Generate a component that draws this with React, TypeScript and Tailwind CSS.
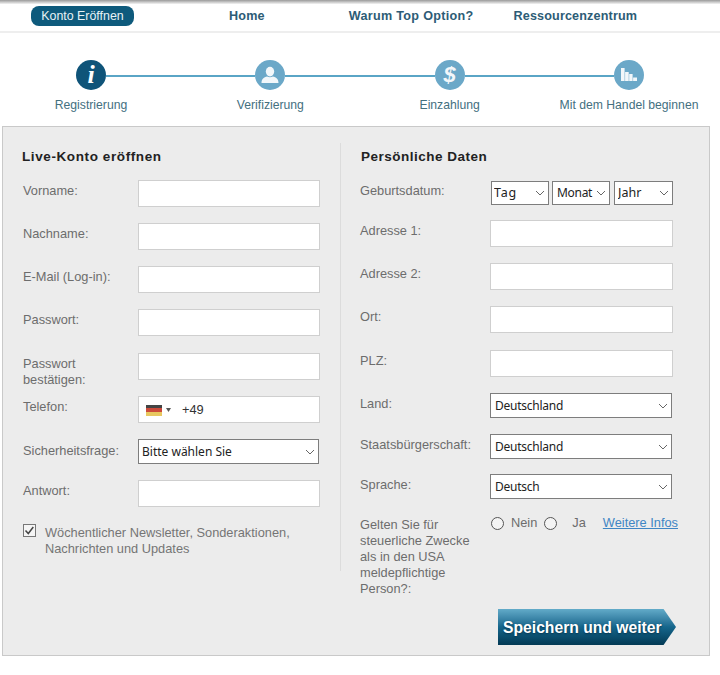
import React from "react";

const sans = "font-['Liberation_Sans',Arial,sans-serif]";
const selectFont = "font-['Noto_Sans',sans-serif]";

function Chevron() {
  return (
    <svg className="pointer-events-none absolute right-[4px] top-1/2 -translate-y-1/2" width="10" height="6" viewBox="0 0 10 6" fill="none">
      <path d="M1 1l4 4 4-4" stroke="#666" strokeWidth="1" />
    </svg>
  );
}

function Sel({ value, className, pad = "pl-[4px]", text = "text-[12px]" }: { value: string; className: string; pad?: string; text?: string }) {
  return (
    <div className={`relative shrink-0 ${className}`}>
      <select
        defaultValue={value}
        className={`block h-full w-full appearance-none rounded-none border border-[#7d7d7d] bg-white ${pad} ${text} text-[#222] outline-none ${selectFont}`}
      >
        <option>{value}</option>
      </select>
      <Chevron />
    </div>
  );
}

function Field({ className = "" }: { className?: string }) {
  return <input className={`block h-[27px] shrink-0 border border-[#cfcfcf] bg-white outline-none ${className}`} />;
}

function Row({ label, labelW, mb, pt = "pt-[3px]", children }: { label: React.ReactNode; labelW: string; mb: string; pt?: string; children: React.ReactNode }) {
  return (
    <div className={`flex items-start ${mb}`}>
      <div className={`${labelW} shrink-0 ${pt} text-[12.8px] leading-[16px] text-[#6d6d6d]`}>{label}</div>
      {children}
    </div>
  );
}

function Step({ label, active, children }: { label: string; active?: boolean; children: React.ReactNode }) {
  return (
    <div className="flex w-[30px] shrink-0 flex-col items-center">
      <div className={`flex h-[30px] w-[30px] items-center justify-center rounded-full ${active ? "bg-[#0f5479]" : "bg-[#6ba8c8]"}`}>{children}</div>
      <div className="mt-[7px] whitespace-nowrap text-[12.2px] leading-[16px] text-[#44707f]">{label}</div>
    </div>
  );
}

function Line() {
  return <div className="mt-[15px] h-[2px] flex-1 bg-[#5aa5c6]" />;
}

export default function App() {
  return (
    <div className={`h-[675px] w-[720px] overflow-hidden bg-white ${sans}`}>
      <div className="h-[4px] bg-gradient-to-b from-[#9a9a9a] to-[#f4f4f4]" />
      <nav className="flex h-[29px] items-start border-b-2 border-[#eeeeee] pt-[2px]">
        <div className="ml-[31px] flex h-[20px] w-[103px] items-center justify-center rounded-[8px] bg-[#0e5a7c] text-[12.4px] text-[#e8f2f6]">Konto Eröffnen</div>
        <div className="ml-[95px] text-[12.6px] font-bold leading-[20px] tracking-[0.2px] text-[#2d5c76]">Home</div>
        <div className="ml-[84px] text-[12.6px] font-bold leading-[20px] tracking-[0.3px] text-[#2d5c76]">Warum Top Option?</div>
        <div className="ml-[40px] text-[12.6px] font-bold leading-[20px] tracking-[0.15px] text-[#2d5c76]">Ressourcenzentrum</div>
      </nav>

      <div className="flex h-[93px] px-[76px] pt-[27px]">
        <Step label="Registrierung" active>
          <span className="font-['Liberation_Serif',serif] text-[26px] font-bold italic leading-none text-white">i</span>
        </Step>
        <Line />
        <Step label="Verifizierung">
          <svg width="20" height="20" viewBox="0 0 20 20" fill="#f2f7fa">
            <ellipse cx="10" cy="6.6" rx="4.2" ry="4.8" />
            <path d="M1.500 18c0-4 2.500-5.600 5.600-6.400 1.800 1 4 1 5.800 0 3.100.8 5.600 2.400 5.600 6.400z" />
          </svg>
        </Step>
        <Line />
        <Step label="Einzahlung">
          <span className="text-[22px] font-bold italic leading-none text-[#f2f7fa]">$</span>
        </Step>
        <Line />
        <Step label="Mit dem Handel beginnen">
          <svg width="20" height="20" viewBox="0 0 20 20" fill="#f2f7fa">
            <rect x="2" y="3" width="3.600" height="13" />
            <rect x="6.100" y="7" width="3.600" height="9" />
            <rect x="10.200" y="9" width="3.400" height="7" />
            <rect x="14.100" y="12.500" width="3.900" height="3.500" />
          </svg>
        </Step>
      </div>

      <form className="ml-[2px] flex h-[530px] w-[708px] border border-[#c9c9c9] bg-[#ececec]">
        <div className="w-[337px] shrink-0 pl-[20px] pt-[22px]">
          <h2 className="-ml-[1px] mb-[15px] text-[13.5px] font-bold leading-[16px] tracking-[0.6px] text-[#222]">Live-Konto eröffnen</h2>
          <Row label="Vorname:" labelW="w-[115px]" mb="mb-[16px]"><Field className="w-[182px]" /></Row>
          <Row label="Nachname:" labelW="w-[115px]" mb="mb-[16px]"><Field className="w-[182px]" /></Row>
          <Row label="E-Mail (Log-in):" labelW="w-[115px]" mb="mb-[16px]"><Field className="w-[182px]" /></Row>
          <Row label="Passwort:" labelW="w-[115px]" mb="mb-[17px]"><Field className="w-[182px]" /></Row>
          <Row label={<>Passwort<br />bestätigen:</>} labelW="w-[115px]" mb="mb-[8px]"><Field className="w-[182px]" /></Row>
          <Row label="Telefon:" labelW="w-[115px]" mb="mb-[16px]">
            <div className="flex h-[27px] w-[182px] shrink-0 items-center border border-[#cfcfcf] bg-white pl-[7px] pt-[1px]">
              <div className="flex h-[11px] w-[16px] flex-col">
                <div className="flex-1 bg-[#444]" />
                <div className="flex-1 bg-[#cc4a3a]" />
                <div className="flex-1 bg-[#e8c860]" />
              </div>
              <svg className="ml-[4px]" width="5" height="4" viewBox="0 0 5 4" fill="#555"><path d="M0 0h5L2.500 4z" /></svg>
              <span className="ml-[11px] text-[12.8px] text-[#333]">+49</span>
            </div>
          </Row>
          <Row label="Sicherheitsfrage:" labelW="w-[115px]" mb="mb-[16px]" pt="pt-[4px]"><Sel value="Bitte wählen Sie" pad="pl-[3px] pt-[1px]" className="h-[25px] w-[181px]" /></Row>
          <Row label="Antwort:" labelW="w-[115px]" mb="mb-[17px]"><Field className="w-[182px]" /></Row>
          <div className="flex items-start">
            <svg className="shrink-0" width="13" height="13" viewBox="0 0 13 13" fill="none">
              <rect x="0.500" y="0.500" width="12" height="12" fill="#f5f5f5" stroke="#777" />
              <path d="M2.500 6.500l2.800 3 5-6.500" stroke="#444" strokeWidth="1.500" />
            </svg>
            <div className="ml-[9px] pt-[1px] text-[12.8px] leading-[16px] text-[#757575]">Wöchentlicher Newsletter, Sonderaktionen,<br />Nachrichten und Updates</div>
          </div>
        </div>

        <div className="mt-[16px] h-[428px] w-px shrink-0 bg-[#dcdcdc]" />

        <div className="flex-1 pl-[19px] pt-[22px]">
          <h2 className="ml-[1px] mb-[15px] text-[13.5px] font-bold leading-[16px] tracking-[0.5px] text-[#222]">Persönliche Daten</h2>
          <Row label="Geburtsdatum:" labelW="w-[130px]" mb="mb-[15px]">
            <div className="mt-[1px] flex gap-[3px] pl-[1px]">
              <Sel value="Tag" pad="pl-[2px]" text="text-[12.5px] tracking-[0.8px]" className="h-[24px] w-[58px]" />
              <Sel value="Monat" pad="pl-[4px]" text="text-[12px] tracking-[-0.3px]" className="h-[24px] w-[58px]" />
              <Sel value="Jahr" pad="pl-[3px]" text="text-[12.5px]" className="ml-[1px] h-[24px] w-[59px]" />
            </div>
          </Row>
          <Row label="Adresse 1:" labelW="w-[130px]" mb="mb-[16px]"><Field className="w-[183px]" /></Row>
          <Row label="Adresse 2:" labelW="w-[130px]" mb="mb-[16px]"><Field className="w-[183px]" /></Row>
          <Row label="Ort:" labelW="w-[130px]" mb="mb-[17px]"><Field className="w-[183px]" /></Row>
          <Row label="PLZ:" labelW="w-[130px]" mb="mb-[16px]"><Field className="w-[183px]" /></Row>
          <Row label="Land:" labelW="w-[130px]" mb="mb-[16px]"><Sel value="Deutschland" text="text-[12px] tracking-[-0.25px]" className="h-[25px] w-[182px]" /></Row>
          <Row label="Staatsbürgerschaft:" labelW="w-[130px]" mb="mb-[15px]"><Sel value="Deutschland" text="text-[12px] tracking-[-0.25px]" className="h-[25px] w-[182px]" /></Row>
          <Row label="Sprache:" labelW="w-[130px]" mb="mb-[17px]"><Sel value="Deutsch" text="text-[12px] tracking-[-0.25px]" className="h-[25px] w-[182px]" /></Row>
          <div className="flex items-start">
            <div className="w-[130px] shrink-0 pt-[1px] text-[12.8px] leading-[16px] text-[#6d6d6d]">Gelten Sie für<br />steuerliche Zwecke<br />als in den USA<br />meldepflichtige<br />Person?:</div>
            <div className="-mt-[1px] flex items-center text-[12.8px] leading-[16px] text-[#6d6d6d]">
              <span className="ml-[1px] h-[13px] w-[13px] rounded-full border border-[#555] bg-[#f4f4f4]" />
              <span className="ml-[7px]">Nein</span>
              <span className="ml-[7px] h-[13px] w-[13px] rounded-full border border-[#555] bg-[#f4f4f4]" />
              <span className="ml-[15px]">Ja</span>
              <a className="ml-[17px] text-[#3f86c4] underline">Weitere Infos</a>
            </div>
          </div>
          <div className="mt-[12px] flex justify-end pr-[33px]">
            <button type="button" className="flex h-[36px] w-[178px] items-center bg-gradient-to-b from-[#62abc9] via-[#15668c] to-[#043a55] pl-[5px] pt-[2px] text-[15.7px] font-bold text-white [clip-path:polygon(0_0,93%_0,100%_50%,93%_100%,0_100%)] [text-shadow:0_1px_2px_#06344c]">Speichern und weiter</button>
          </div>
        </div>
      </form>
    </div>
  );
}
